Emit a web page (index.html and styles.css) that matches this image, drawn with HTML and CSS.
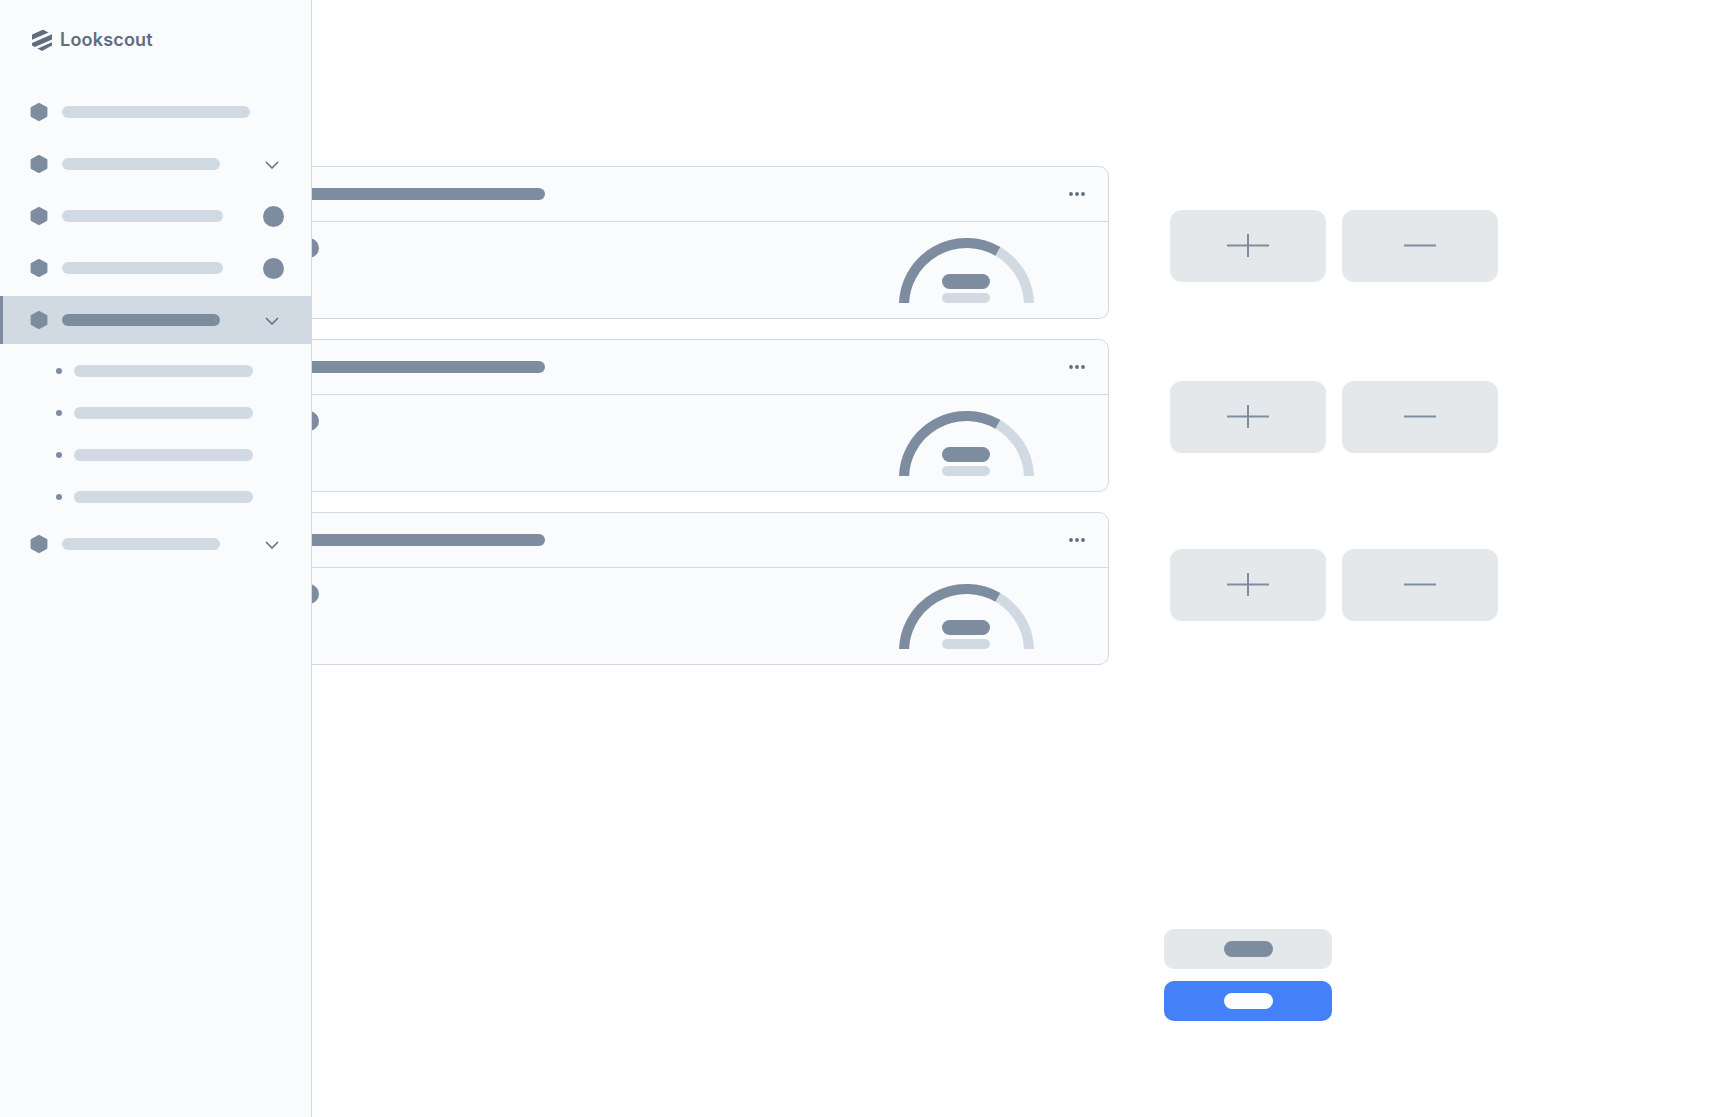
FILE: index.html
```html
<!DOCTYPE html>
<html lang="en">
<head>
    <meta charset="UTF-8">
    <title>Lookscout</title>
    <link rel="stylesheet" href="styles.css">
</head>
<body>
    <svg class="defs" width="0" height="0" aria-hidden="true">
        <defs>
            <symbol id="hex" viewBox="0 0 18 18">
                <polygon points="9,1 16.4,5 16.4,13 9,17 1.6,13 1.6,5"/>
            </symbol>
            <symbol id="chevron" viewBox="0 0 14 8">
                <path d="M1 1L7 7L13 1"/>
            </symbol>
            <symbol id="more" viewBox="0 0 16 4">
                <circle cx="2" cy="2" r="1.9"/>
                <circle cx="8" cy="2" r="1.9"/>
                <circle cx="14" cy="2" r="1.9"/>
            </symbol>
            <symbol id="dial" viewBox="0 0 135 65">
                <path class="dial-track" d="M5 67.5A62.5 62.5 0 0 1 130 67.5"/>
                <path class="dial-value" d="M5 67.5A62.5 62.5 0 0 1 98.75 13.4"/>
            </symbol>
            <symbol id="plus" viewBox="0 0 42 24">
                <path d="M0 11.5H42M21 0V23"/>
            </symbol>
            <symbol id="minus" viewBox="0 0 32 24">
                <path d="M0 11.5H32"/>
            </symbol>
            <clipPath id="logo-clip">
                <polygon points="10,0 20,5.5 20,16.5 10,22 0,16.5 0,5.5"/>
            </clipPath>
        </defs>
    </svg>

    <div class="app">
        <!-- sidebar -->
        <aside class="sidebar">
            <div class="logo">
                <svg class="logo-mark" viewBox="0 0 20 22" width="20" height="22">
                    <g clip-path="url(#logo-clip)">
                        <path d="M-2 9L22 -1.6M-2 17.5L22 6.9M-2 25.5L22 14.9"/>
                    </g>
                </svg>
                <span class="logo-name">Lookscout</span>
            </div>
            <nav class="nav">
                <div class="nav-row">
                    <svg class="hex"><use href="#hex"/></svg>
                    <span class="bar bar-188"></span>
                </div>
                <div class="nav-row">
                    <svg class="hex"><use href="#hex"/></svg>
                    <span class="bar bar-158"></span>
                    <svg class="chevron"><use href="#chevron"/></svg>
                </div>
                <div class="nav-row">
                    <svg class="hex"><use href="#hex"/></svg>
                    <span class="bar bar-160"></span>
                    <span class="nav-badge"></span>
                </div>
                <div class="nav-row">
                    <svg class="hex"><use href="#hex"/></svg>
                    <span class="bar bar-160"></span>
                    <span class="nav-badge"></span>
                </div>
                <div class="nav-row active">
                    <svg class="hex"><use href="#hex"/></svg>
                    <span class="bar bar-158"></span>
                    <svg class="chevron"><use href="#chevron"/></svg>
                </div>
                <div class="sub-list">
                    <div class="sub-row"><span class="sub-dot"></span><span class="bar bar-178"></span></div>
                    <div class="sub-row"><span class="sub-dot"></span><span class="bar bar-178"></span></div>
                    <div class="sub-row"><span class="sub-dot"></span><span class="bar bar-178"></span></div>
                    <div class="sub-row"><span class="sub-dot"></span><span class="bar bar-178"></span></div>
                </div>
                <div class="nav-row">
                    <svg class="hex"><use href="#hex"/></svg>
                    <span class="bar bar-158"></span>
                    <svg class="chevron"><use href="#chevron"/></svg>
                </div>
            </nav>
        </aside>

        <main class="content">
            <!-- cards -->
            <div class="cards">
                <section class="card">
                    <div class="card-head">
                        <span class="card-title"></span>
                        <svg class="more"><use href="#more"/></svg>
                    </div>
                    <div class="card-body">
                        <span class="card-dot"></span>
                        <div class="gauge">
                            <svg class="dial"><use href="#dial"/></svg>
                            <div class="gauge-label"><span class="pill-dark"></span><span class="pill-light"></span></div>
                        </div>
                    </div>
                </section>
                <section class="card">
                    <div class="card-head">
                        <span class="card-title"></span>
                        <svg class="more"><use href="#more"/></svg>
                    </div>
                    <div class="card-body">
                        <span class="card-dot"></span>
                        <div class="gauge">
                            <svg class="dial"><use href="#dial"/></svg>
                            <div class="gauge-label"><span class="pill-dark"></span><span class="pill-light"></span></div>
                        </div>
                    </div>
                </section>
                <section class="card">
                    <div class="card-head">
                        <span class="card-title"></span>
                        <svg class="more"><use href="#more"/></svg>
                    </div>
                    <div class="card-body">
                        <span class="card-dot"></span>
                        <div class="gauge">
                            <svg class="dial"><use href="#dial"/></svg>
                            <div class="gauge-label"><span class="pill-dark"></span><span class="pill-light"></span></div>
                        </div>
                    </div>
                </section>
            </div>

            <!-- right column -->
            <div class="actions">
                <div class="stepper">
                    <button class="step-btn"><svg class="plus"><use href="#plus"/></svg></button>
                    <button class="step-btn"><svg class="minus"><use href="#minus"/></svg></button>
                </div>
                <div class="stepper stepper-2">
                    <button class="step-btn"><svg class="plus"><use href="#plus"/></svg></button>
                    <button class="step-btn"><svg class="minus"><use href="#minus"/></svg></button>
                </div>
                <div class="stepper stepper-3">
                    <button class="step-btn"><svg class="plus"><use href="#plus"/></svg></button>
                    <button class="step-btn"><svg class="minus"><use href="#minus"/></svg></button>
                </div>
                <div class="form-buttons">
                    <button class="form-btn"><span class="form-pill"></span></button>
                    <button class="form-btn primary"><span class="form-pill"></span></button>
                </div>
            </div>
        </main>
    </div>
</body>
</html>
```

FILE: styles.css
```css
html, body { margin: 0; padding: 0; height: 100%; background: #fff; overflow: hidden; font-family: Inter, "Liberation Sans", sans-serif; }
button { border: none; padding: 0; cursor: pointer; }
.defs { display: block; height: 0; }

.app { display: flex; height: 100vh; }

/* sidebar */
.sidebar { flex: 0 0 312px; box-sizing: border-box; position: relative; z-index: 1; padding-top: 28px; background: #fafbfd; border-right: 1px solid #d1d9e3; }
.logo { display: flex; align-items: center; gap: 8px; height: 24px; padding-left: 32px; margin-bottom: 36px; }
.logo-mark { display: block; fill: none; stroke: #5f6d80; stroke-width: 4.8; }
.logo-name { font-size: 18px; font-weight: 600; line-height: 24px; letter-spacing: .2px; color: #5f6d80; }

.nav-row { display: flex; align-items: center; gap: 14px; height: 48px; margin-bottom: 4px; padding: 0 27px 0 30px; }
.nav-row.active { background: #d1d9e3; box-shadow: inset 3px 0 0 #7e8c9f; margin-bottom: 0; }
.nav-row.active .bar { background: #7e8c9f; }
.hex { display: block; flex: none; width: 18px; height: 18px; fill: #7e8c9f; stroke: #7e8c9f; stroke-width: 2; stroke-linejoin: round; }
.chevron { display: block; flex: none; width: 14px; height: 8px; margin: 1px 5px 0 auto; fill: none; stroke: #5f6d80; stroke-width: 1.5; }
.nav-badge { flex: none; width: 21px; height: 21px; margin-left: auto; border-radius: 50%; background: #7e8c9f; }

.bar { display: block; flex: none; height: 12px; border-radius: 6px; background: #d1d9e3; }
.bar-188 { width: 188px; }
.bar-178 { width: 178.5px; }
.bar-160 { width: 160.5px; }
.bar-158 { width: 158px; }

.sub-list { padding: 6px 0 2px; }
.sub-row { display: flex; align-items: center; gap: 12px; height: 42px; padding-left: 56px; }
.sub-dot { flex: none; width: 6px; height: 6px; border-radius: 50%; background: #7e8c9f; }

/* main area, slides a bit under the sidebar */
.content { flex: 1 1 auto; display: flex; align-items: flex-start; margin-left: -38px; }

.cards { flex: 0 0 835px; display: flex; flex-direction: column; gap: 20px; margin-top: 166px; }
.card { box-sizing: border-box; height: 153px; background: #fafbfd; border: 1px solid #d1d9e3; border-radius: 10px; }
.card-head { display: flex; align-items: center; justify-content: space-between; height: 54px; padding: 0 23px 0 24px; border-bottom: 1px solid #d1d9e3; }
.card-title { width: 246px; height: 12px; border-radius: 6px; background: #7e8c9f; }
.more { display: block; width: 16px; height: 4px; fill: #5f6d80; }
.card-body { display: flex; align-items: flex-start; justify-content: space-between; padding: 16px 74px 0 24px; }
.card-dot { width: 20px; height: 20px; border-radius: 50%; background: #7e8c9f; }

.gauge { position: relative; width: 135px; height: 65px; }
.dial { display: block; width: 135px; height: 65px; fill: none; stroke-width: 10; }
.dial-track { stroke: #d1d9e3; }
.dial-value { stroke: #7e8c9f; }
.gauge-label { position: absolute; left: 43px; bottom: 0; display: flex; flex-direction: column; gap: 4px; }
.pill-dark { width: 48px; height: 15px; border-radius: 7.5px; background: #7e8c9f; }
.pill-light { width: 48px; height: 10px; border-radius: 5px; background: #d1d9e3; }

/* right column */
.actions { margin: 210px 0 0 61px; }
.stepper { display: flex; gap: 16px; }
.stepper-2 { margin-top: 99px; }
.stepper-3 { margin-top: 96px; }
.step-btn { display: flex; align-items: center; justify-content: center; width: 156px; height: 72px; border-radius: 12px; background: #e5e8eb; }
.plus { display: block; width: 42px; height: 24px; fill: none; stroke: #7e8c9f; stroke-width: 2; }
.minus { display: block; width: 32px; height: 24px; fill: none; stroke: #7e8c9f; stroke-width: 2; }

.form-buttons { display: flex; flex-direction: column; gap: 12px; width: 168px; margin: 308px 0 0 -6px; }
.form-btn { display: flex; align-items: center; justify-content: center; height: 40px; border-radius: 10px; background: #e5e8eb; }
.form-pill { width: 49px; height: 16px; border-radius: 8px; background: #7e8c9f; }
.form-btn.primary { background: #4480f8; }
.form-btn.primary .form-pill { background: #fff; }
```
